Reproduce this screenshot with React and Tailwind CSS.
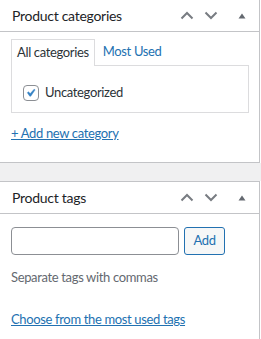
import React from 'react';

const ChevronUp = () => (
  <svg width="14" height="9" viewBox="0 0 14 9" fill="none">
    <path d="M1.5 7.5L7 2l5.5 5.5" stroke="#787c82" strokeWidth="2" />
  </svg>
);

const ChevronDown = () => (
  <svg width="14" height="9" viewBox="0 0 14 9" fill="none">
    <path d="M1.5 1.5L7 7l5.5-5.5" stroke="#787c82" strokeWidth="2" />
  </svg>
);

const Toggle = () => (
  <svg width="8" height="6" viewBox="0 0 8 6">
    <path d="M0.5 5.5L4 0.5l3.5 5z" fill="#646970" />
  </svg>
);

const PanelHeader = ({ title }) => (
  <div className="h-[32px] flex items-center justify-between border-b border-[#c3c4c7] pl-3 pr-[12px]">
    <h2 className="text-[14px] text-[#1d2327] leading-none tracking-[-0.28px]">{title}</h2>
    <div className="flex items-center">
      <span className="w-[24px] flex justify-center"><ChevronUp /></span>
      <span className="w-[24px] flex justify-center"><ChevronDown /></span>
      <span className="w-[24px] flex justify-end pr-[1px]"><Toggle /></span>
    </div>
  </div>
);

const App = () => {
  return (
    <div className="w-[261px] h-[339px] bg-white overflow-hidden tracking-[-0.35px]" style={{ fontFamily: 'Lato, "Noto Sans", sans-serif' }}>
      {/* Product categories */}
      <div className="w-[260px] bg-white border-r border-b border-[#c3c4c7]">
        <PanelHeader title="Product categories" />
        <div className="pt-[7px] pl-[11px] pr-[10px] pb-[20px]">
          <div className="flex items-end">
            <div className="h-[27px] px-[5px] flex items-center border border-b-0 border-[#dcdcde] bg-white text-[13px] text-[#2c3338] relative -mb-px z-10">
              All categories
            </div>
            <div className="h-[26px] pl-[8px] flex items-center text-[13px] text-[#2271b1]">Most Used</div>
          </div>
          <div className="h-[48px] border border-[#dcdcde] pl-[11px] pt-[17px]">
            <label className="flex items-center gap-[6px] text-[13px] text-[#2c3338]">
              <span className="w-[16px] h-[16px] rounded-[4px] border border-[#8c8f94] bg-white flex items-center justify-center">
                <svg width="18" height="18" viewBox="0 0 20 20" className="-ml-px">
                  <path d="M14.83 4.89l1.34.94-5.81 8.38H9.02L5.78 9.67l1.34-1.25 2.57 2.4z" fill="#3582c4" stroke="#3582c4" strokeWidth="0.6" />
                </svg>
              </span>
              Uncategorized
            </label>
          </div>
          <a className="block mt-[11px] text-[13px] text-[#2271b1] underline leading-[18px]">+ Add new category</a>
        </div>
      </div>

      <div className="h-[18px] bg-[#f0f0f1]" />

      {/* Product tags */}
      <div className="w-[260px] h-[200px] bg-white border-t border-r border-[#c3c4c7]">
        <PanelHeader title="Product tags" />
        <div className="pt-[13px] pl-[11px]">
          <div className="flex items-center gap-[5px]">
            <input className="w-[168px] h-[28px] border border-[#8c8f94] rounded-[4px] bg-white px-2 text-[13px] outline-none" />
            <button className="h-[28px] w-[41px] border border-[#2271b1] rounded-[3px] bg-[#f6f7f7] text-[13px] text-[#2271b1]">Add</button>
          </div>
          <p className="mt-[13px] text-[13px] text-[#646970] leading-[18px]">Separate tags with commas</p>
          <a className="block mt-[24px] text-[13px] text-[#2271b1] underline leading-[18px]">Choose from the most used tags</a>
        </div>
      </div>
    </div>
  );
};

export default App;
